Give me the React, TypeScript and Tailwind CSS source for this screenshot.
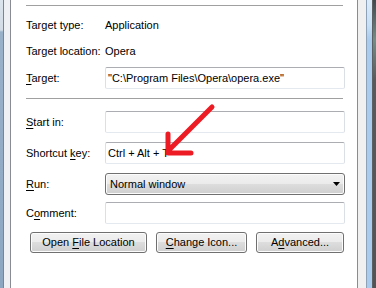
import React from 'react';

const font = { fontFamily: '"Liberation Sans", Arial, sans-serif' };

// access-key letter
const K = ({ c }: { c: string }) => (
  <span className="underline decoration-1 underline-offset-[2px]">{c}</span>
);

const TextBox = ({ value }: { value?: string }) => (
  <div className="h-[22px] w-[240px] rounded-[2px] border border-[#dbdfe6] border-t-[#abadb3] border-b-[#e3e9ef] bg-white pl-[2px] flex items-center text-black whitespace-nowrap">
    <span>{value}</span>
  </div>
);

const WinButton = ({ width, children }: { width: string; children: React.ReactNode }) => (
  <div
    className={`${width} h-[21px] rounded-[3px] border border-[#707070] bg-[linear-gradient(#f2f2f2,#ebebeb_50%,#dddddd_50%,#cfcfcf)] shadow-[inset_0_0_0_1px_#fcfcfc] flex items-center justify-center text-black`}
  >
    <span className="whitespace-pre">{children}</span>
  </div>
);

const Row = ({ label, children, className }: { label: React.ReactNode; children: React.ReactNode; className?: string }) => (
  <div className={`flex items-center ${className ?? ''}`}>
    <div className="w-[79px] shrink-0 text-black whitespace-nowrap">{label}</div>
    {children}
  </div>
);

const Separator = ({ className }: { className?: string }) => (
  <div className={`h-px w-[317px] bg-[#a0a0a0] ${className ?? ''}`} />
);

export default function App() {
  return (
    <div className="relative flex h-[288px] w-[376px] overflow-hidden bg-[#f0f0f0] text-[11px] leading-none" style={font}>
      {/* left window frame */}
      <div className="w-[3px] shrink-0 bg-[linear-gradient(#dbe3ec_0px,#d3dce6_30px,#9ab1ca_32px,#8ca6c2)]" />
      <div className="w-px shrink-0 bg-[#71879f]" />
      <div className="w-[6px] shrink-0 bg-[#eef0f3]" />
      <div className="w-px shrink-0 bg-[#898c95]" />

      {/* tab page */}
      <div className="w-[346px] shrink-0 bg-white pl-[15px] pt-[5px] flex flex-col">
        <Separator />

        <Row label="Target type:" className="mt-[11px] h-[16px]">
          <span className="text-black">Application</span>
        </Row>
        <Row label="Target location:" className="mt-[10px] h-[16px]">
          <span className="text-black">Opera</span>
        </Row>
        <Row label={<><K c="T" />arget:</>} className="mt-[8px]">
          <TextBox value={'"C:\\Program Files\\Opera\\opera.exe"'} />
        </Row>

        <Separator className="mt-[9px]" />

        <Row label={<><K c="S" />tart in:</>} className="mt-[12px]">
          <TextBox />
        </Row>
        <Row label={<>Shortcut <K c="k" />ey:</>} className="mt-[9px]">
          <TextBox value="Ctrl + Alt + T" />
        </Row>
        <Row label={<><K c="R" />un:</>} className="mt-[9px]">
          <div className="relative h-[22px] w-[240px] rounded-[3px] border border-[#707070] bg-[linear-gradient(#f2f2f2,#ebebeb_50%,#dddddd_50%,#cfcfcf)] shadow-[inset_0_0_0_1px_#fcfcfc] flex items-center pl-[4px] text-black">
            Normal window
            <svg className="absolute right-[4px] top-[8px]" width="7" height="4" viewBox="0 0 7 4">
              <path d="M0 0h7L3.5 4z" fill="#000" />
            </svg>
          </div>
        </Row>
        <Row label={<>C<K c="o" />mment:</>} className="mt-[7px]">
          <TextBox />
        </Row>

        <div className="mt-[8px] ml-[4px] flex gap-[9px]">
          <WinButton width="w-[117px]">Open <K c="F" />ile Location</WinButton>
          <WinButton width="w-[91px]"><K c="C" />hange Icon...</WinButton>
          <WinButton width="w-[88px]">A<K c="d" />vanced...</WinButton>
        </div>
      </div>

      {/* right window frame */}
      <div className="w-px shrink-0 bg-[#898c95]" />
      <div className="w-[8px] shrink-0 bg-[#f0f0f0]" />
      <div className="w-px shrink-0 bg-[#8da2b8]" />
      <div className="w-[5px] shrink-0 bg-[linear-gradient(#dcebf8,#c7e0f5_25px,#a9cbee_40px,#a9cbee)]" />
      <div className="w-px shrink-0 bg-[#5d5f61]" />
      <div className="w-[3px] shrink-0 bg-[linear-gradient(#3d4a4f,#6f8f86_40px,#555b5d_80px,#4f5456)]" />

      {/* red hand-drawn arrow */}
      <svg className="absolute left-0 top-0 pointer-events-none" width="376" height="288" viewBox="0 0 376 288">
        <path
          d="M212 107 L170 149 M168 134 L168 153 L191 153"
          fill="none"
          stroke="#ed1c24"
          strokeWidth="5"
          strokeLinecap="round"
          strokeLinejoin="round"
        />
      </svg>
    </div>
  );
}
